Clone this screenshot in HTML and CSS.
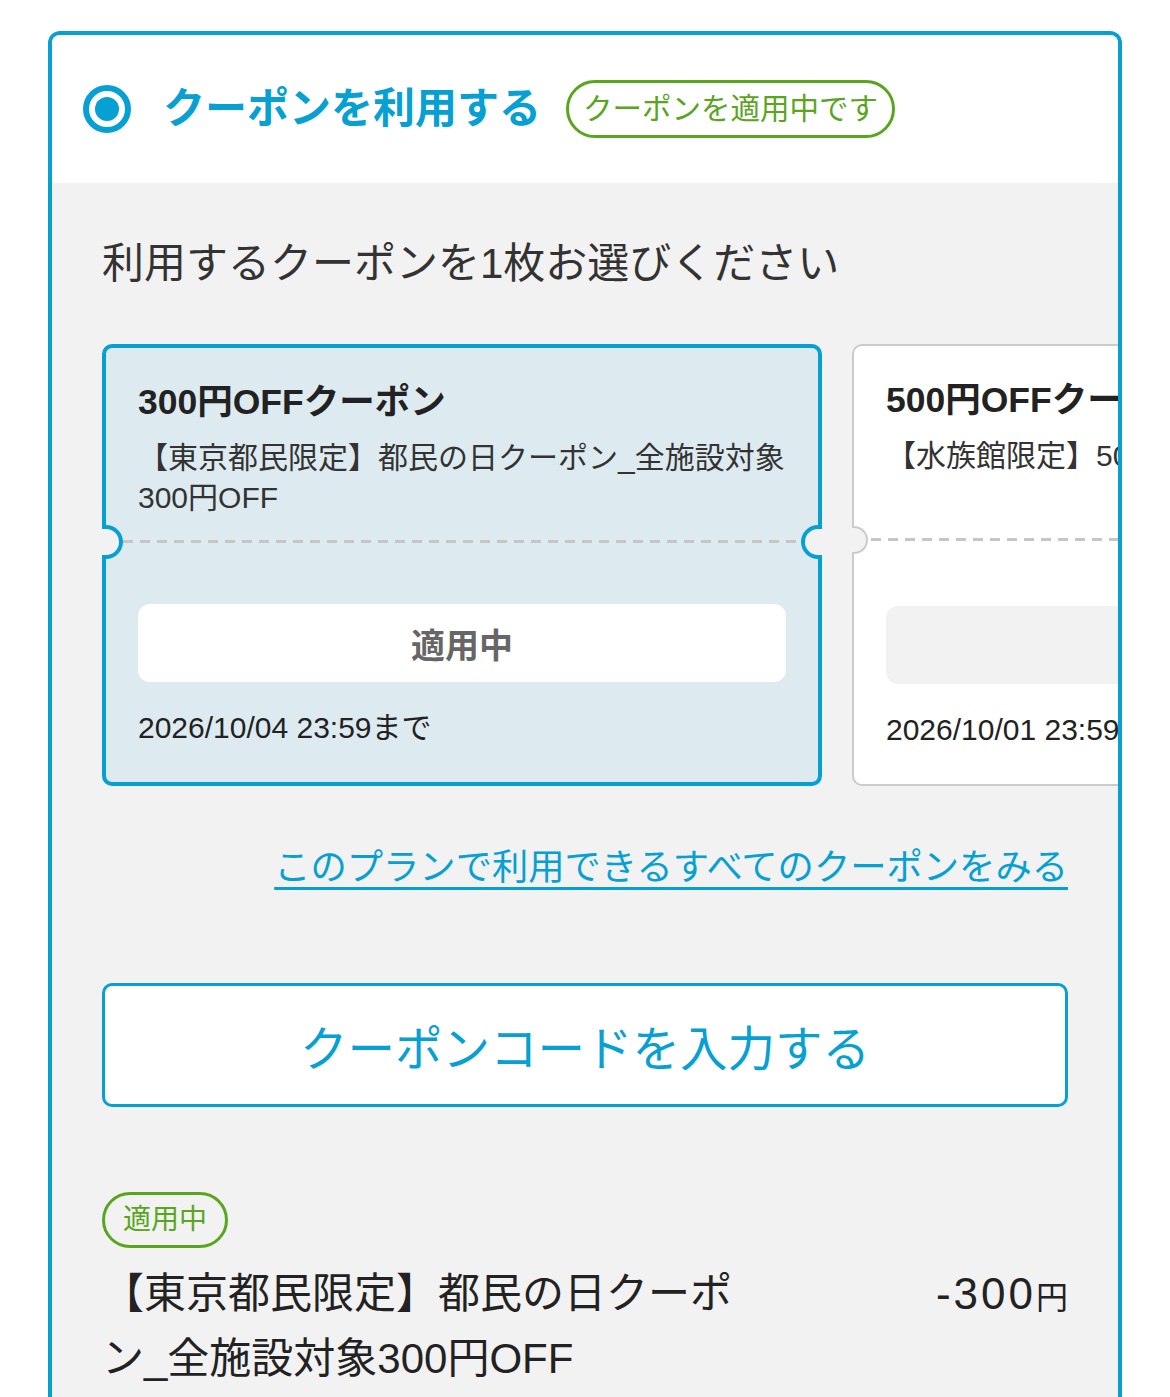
FILE: index.html
```html
<!DOCTYPE html>
<html lang="ja">
<head>
  <meta charset="UTF-8" />
  <meta name="viewport" content="width=device-width, initial-scale=1.0" />
  <title>クーポンを利用する</title>
  <link rel="stylesheet" href="styles.css">
</head>
<body>
  <div class="coupon-panel">
    <div class="panel-head">
      <span class="radio"></span>
      <h2 class="panel-title">クーポンを利用する</h2>
      <span class="status-badge">クーポンを適用中です</span>
    </div>

    <div class="panel-body">
      <p class="lead">利用するクーポンを1枚お選びください</p>

      <div class="coupon-list">
        <div class="coupon selected">
          <div class="coupon-top">
            <h3 class="coupon-title">300円OFFクーポン</h3>
            <p class="coupon-desc">【東京都民限定】都民の日クーポン_全施設対象300円OFF</p>
          </div>
          <div class="coupon-cut"></div>
          <div class="coupon-bottom">
            <button type="button" class="coupon-btn">適用中</button>
            <p class="coupon-date">2026/10/04 23:59まで</p>
          </div>
        </div>

        <div class="coupon">
          <div class="coupon-top">
            <h3 class="coupon-title">500円OFFクーポン</h3>
            <p class="coupon-desc">【水族館限定】500円OFFクーポン</p>
          </div>
          <div class="coupon-cut"></div>
          <div class="coupon-bottom">
            <button type="button" class="coupon-btn"></button>
            <p class="coupon-date">2026/10/01 23:59まで</p>
          </div>
        </div>
      </div>

      <div class="all-link-row">
        <a class="all-link" href="#">このプランで利用できるすべてのクーポンをみる</a>
      </div>

      <button type="button" class="code-btn">クーポンコードを入力する</button>

      <div class="applied">
        <span class="applied-badge">適用中</span>
        <div class="applied-row">
          <p class="applied-name">【東京都民限定】都民の日クーポン_全施設対象300円OFF</p>
          <p class="applied-price">-300<small>円</small></p>
        </div>
      </div>
    </div>
  </div>
</body>
</html>
```

FILE: styles.css
```css
:root {
  --blue: #06a0d3;
  --green: #5aa51e;
  --gray-bg: #f2f2f2;
  --text: #222;
}
body {
  margin: 0;
  padding: 31px 48px 0;
  font-family: "Liberation Sans", "Noto Sans CJK JP", sans-serif;
  color: var(--text);
  background: #fff;
}
.coupon-panel {
  border: 4px solid var(--blue);
  border-bottom: none;
  border-radius: 12px 12px 0 0;
  overflow: hidden;
}
.panel-head {
  height: 148px;
  display: flex;
  align-items: center;
  padding-left: 31px;
  background: #fff;
}
.radio {
  width: 48px;
  height: 48px;
  box-sizing: border-box;
  border: 6px solid var(--blue);
  padding: 6px;
  border-radius: 50%;
  background: var(--blue);
  background-clip: content-box;
  flex: none;
}
.panel-title {
  margin: 0 0 0 32px;
  font-size: 42px;
  font-weight: bold;
  color: var(--blue);
  line-height: 56px;
}
.status-badge {
  margin-left: 25px;
  height: 58px;
  box-sizing: border-box;
  border: 3px solid var(--green);
  border-radius: 29px;
  padding: 0 14px;
  font-size: 29.5px;
  line-height: 52px;
  color: var(--green);
  white-space: nowrap;
}
.panel-body {
  background: var(--gray-bg);
  padding: 53px 50px 120px;
  overflow: hidden;
}
.lead {
  margin: 0;
  font-size: 42px;
  line-height: 56px;
  color: #333;
}
.coupon-list {
  margin-top: 52px;
  display: flex;
  gap: 30px;
}
.coupon {
  --bw: 2px;
  --bc: #cbcbcb;
  --notch: 14px;
  flex: 0 0 720px;
  box-sizing: border-box;
  border: var(--bw) solid var(--bc);
  border-radius: 10px;
  background: #fff;
  display: flex;
  flex-direction: column;
}
.coupon.selected {
  --bw: 4px;
  --bc: var(--blue);
  --notch: 17px;
  background: #ddebf1;
}
.coupon-top {
  height: 192px;
  box-sizing: border-box;
  padding: 32px 32px 0;
}
.coupon-title {
  margin: 0;
  font-size: 35.5px;
  font-weight: bold;
  line-height: 44px;
  white-space: nowrap;
}
.coupon-desc {
  margin: 14px -10px 0 0;
  font-size: 30px;
  line-height: 40px;
  color: #333;
}
.coupon .coupon-desc {
  white-space: nowrap;
}
.coupon.selected .coupon-desc {
  white-space: normal;
}
.coupon-cut {
  position: relative;
  height: 3px;
  background: repeating-linear-gradient(90deg, #c6c6c6 0 10px, transparent 10px 17px);
}
.coupon-cut::before,
.coupon-cut::after {
  content: "";
  position: absolute;
  top: 50%;
  width: calc(var(--notch) + var(--bw));
  height: calc(var(--notch) * 2);
  margin-top: calc(var(--notch) * -1);
  box-sizing: border-box;
  border: var(--bw) solid var(--bc);
  background: var(--gray-bg);
}
.coupon-cut::before {
  left: calc(var(--bw) * -1);
  border-left: none;
  border-radius: 0 var(--notch) var(--notch) 0;
}
.coupon-cut::after {
  right: calc(var(--bw) * -1);
  border-right: none;
  border-radius: var(--notch) 0 0 var(--notch);
}
.coupon-bottom {
  margin-top: auto;
  padding: 61px 32px 34px;
}
.coupon-btn {
  display: block;
  width: 100%;
  height: 78px;
  border: none;
  border-radius: 12px;
  background: var(--gray-bg);
  font-family: inherit;
  font-size: 34px;
  font-weight: bold;
  color: #666;
}
.coupon.selected .coupon-btn {
  background: #fff;
}
.coupon-date {
  margin: 26px 0 0;
  font-size: 30px;
  line-height: 40px;
  white-space: nowrap;
}
.all-link-row {
  margin-top: 57px;
  text-align: right;
  font-size: 36.3px;
  line-height: 50px;
  height: 50px;
}
.all-link {
  color: var(--blue);
  text-decoration: underline;
  text-decoration-thickness: 3px;
  text-underline-offset: 7px;
}
.code-btn {
  display: block;
  width: 100%;
  height: 124px;
  margin-top: 90px;
  box-sizing: border-box;
  border: 3px solid var(--blue);
  border-radius: 10px;
  background: #fff;
  font-family: inherit;
  font-size: 47.5px;
  color: var(--blue);
}
.applied {
  margin-top: 85px;
}
.applied-badge {
  display: inline-block;
  vertical-align: top;
  height: 56px;
  box-sizing: border-box;
  border: 3px solid var(--green);
  border-radius: 28px;
  padding: 0 18px;
  font-size: 28px;
  line-height: 50px;
  color: var(--green);
}
.applied-row {
  margin-top: 13px;
  display: flex;
  justify-content: space-between;
  align-items: flex-start;
}
.applied-name {
  margin: 0;
  width: 650px;
  font-size: 42px;
  line-height: 65px;
}
.applied-price {
  margin: 0;
  font-size: 44px;
  line-height: 65px;
  letter-spacing: 3px;
  white-space: nowrap;
}
.applied-price small {
  font-size: 32px;
  letter-spacing: 0;
}
```
